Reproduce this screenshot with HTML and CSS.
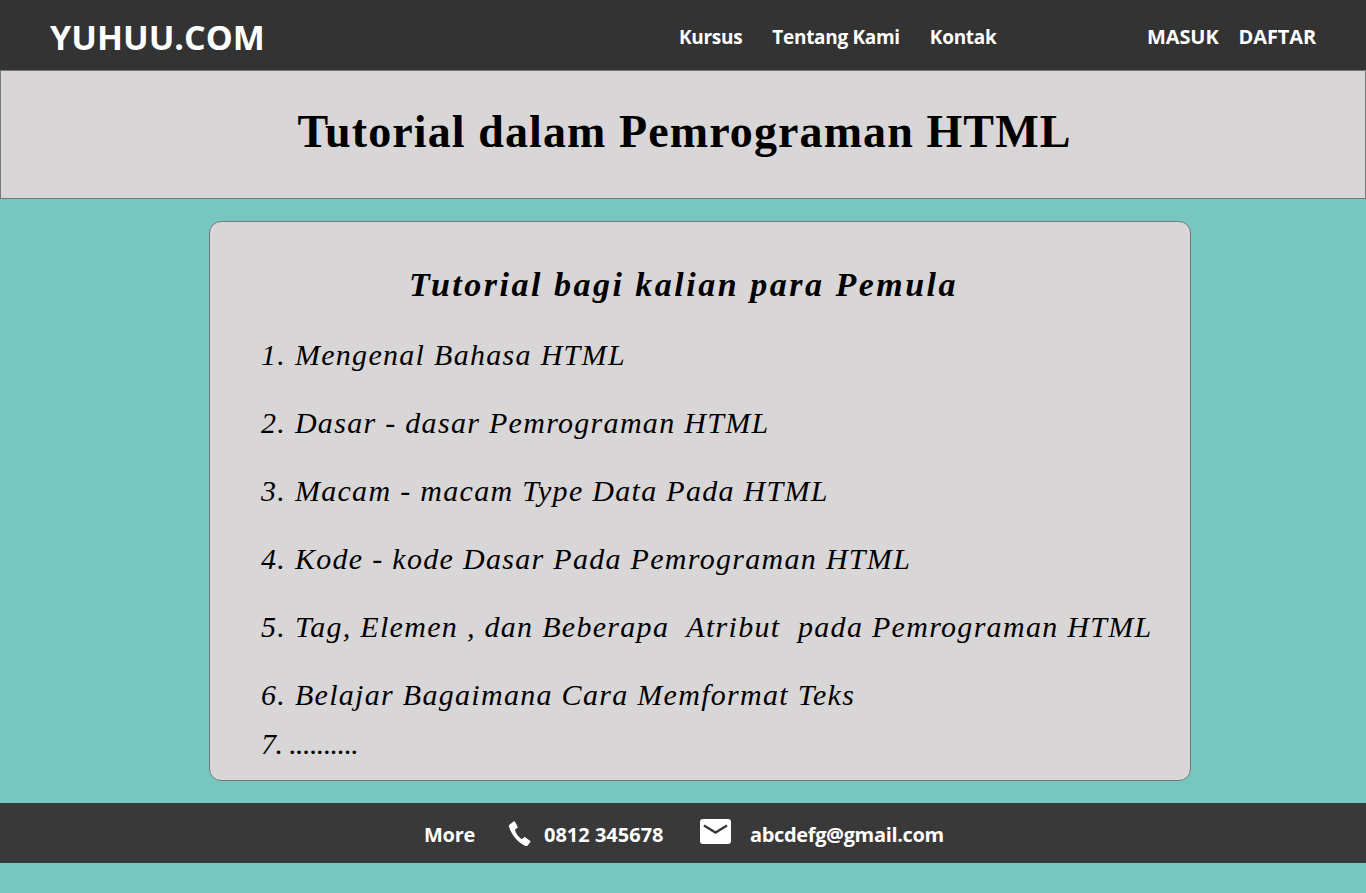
FILE: index.html
```html
<!DOCTYPE html>
<html lang="id">
<head>
    <meta charset="UTF-8">
    <meta name="viewport" content="width=device-width, initial-scale=1.0">
    <title>Tutorial dalam Pemrograman HTML</title>
    <link rel="stylesheet" href="styles.css">
</head>
<body>
    <header class="topbar">
        <div class="logo">YUHUU.COM</div>
        <nav class="menu">
            <a href="#">Kursus</a>
            <a href="#">Tentang Kami</a>
            <a href="#">Kontak</a>
        </nav>
        <div class="akun">
            <a href="#">MASUK</a>
            <a href="#">DAFTAR</a>
        </div>
    </header>

    <section class="banner">
        <h1>Tutorial dalam Pemrograman HTML</h1>
    </section>

    <main class="kartu">
        <h2>Tutorial bagi kalian para Pemula</h2>
        <ul class="daftar">
            <li>1. Mengenal Bahasa HTML</li>
            <li>2. Dasar - dasar Pemrograman HTML</li>
            <li>3. Macam - macam Type Data Pada HTML</li>
            <li>4. Kode - kode Dasar Pada Pemrograman HTML</li>
            <li>5. Tag, Elemen , dan Beberapa&nbsp; Atribut&nbsp; pada Pemrograman HTML</li>
            <li>6. Belajar Bagaimana Cara Memformat Teks</li>
            <li class="akhir">7. ..........</li>
        </ul>
    </main>

    <footer class="bawah">
        <span class="more">More</span>
        <svg class="ikon-telp" viewBox="0 0 24 26" width="24" height="26">
            <path fill="#fff" d="M2 3.2 5.6.6c.6-.4 1.2-.3 1.5.3l2.5 4.6c.3.6.2 1.1-.3 1.5L7.4 8.300c-.4.300-.5.700-.3 1.200 1 3 3.200 6.200 6 8.200.4.300.8.300 1.200 0l1.700-1.300c.5-.4 1-.4 1.500 0l4.500 3.300c.5.400.6 1 .2 1.500l-2.600 3.200c-.5.600-1.200.8-2 .5C10.800 22.400 3.400 14.500.9 5.300.7 4.400 1.200 3.700 2 3.200z"/>
        </svg>
        <span class="telp">0812 345678</span>
        <svg class="ikon-surat" viewBox="0 0 31 25" width="31" height="25">
            <rect width="31" height="25" rx="3" fill="#fff"/>
            <path d="M4 6.500 15.500 13.500 27 6.500" fill="none" stroke="#393939" stroke-width="2.400"/>
        </svg>
        <span class="email">abcdefg@gmail.com</span>
    </footer>
</body>
</html>
```

FILE: styles.css
```css
body {
    background-color: #76c7c0;
    margin: 0;
    font-family: "Open Sans", "Noto Sans", sans-serif;
    color: #000;
}
a {
    color: #fff;
    text-decoration: none;
}
.topbar {
    background-color: #333;
    height: 70px;
    display: flex;
    align-items: center;
    color: #fff;
    font-weight: 700;
    padding-top: 3px;
    box-sizing: border-box;
}
.logo {
    font-size: 34px;
    font-weight: 700;
    margin-left: 50px;
    width: 629px;
}
.menu {
    display: flex;
    gap: 30px;
    font-size: 19px;
    letter-spacing: -0.3px;
    width: 468px;
}
.akun {
    display: flex;
    gap: 20px;
    font-size: 20px;
    letter-spacing: -0.1px;
}
.banner {
    background-color: #d8d6d7;
    border: 1px solid #777;
    height: 127px;
    display: flex;
    justify-content: center;
}
h1 {
    font-family: "Liberation Serif", serif;
    font-size: 46px;
    font-weight: 700;
    letter-spacing: 1.1px;
    margin: 36px 0 0;
    padding-left: 3px;
    line-height: 50px;
}
.kartu {
    background-color: #d8d6d7;
    border: 1px solid #777;
    border-radius: 12px;
    width: 980px;
    height: 558px;
    margin: 22px 0 22px 209px;
    font-family: "Liberation Serif", serif;
    font-style: italic;
}
h2 {
    font-size: 34px;
    font-weight: 700;
    letter-spacing: 2.500px;
    text-align: center;
    margin: 43px 0 0;
    padding-right: 33px;
    line-height: 40px;
}
.daftar {
    list-style: none;
    margin: 30px 0 0;
    padding: 0 0 0 51px;
    font-size: 30px;
    letter-spacing: 1.300px;
    line-height: 40px;
}
.daftar li {
    margin-bottom: 28px;
    white-space: nowrap;
}
.daftar li.akhir {
    margin-top: -19px;
    margin-bottom: 0;
    letter-spacing: -0.6px;
}
.bawah {
    background-color: #393939;
    height: 60px;
    display: flex;
    align-items: center;
    color: #fff;
    font-size: 20px;
    font-weight: 700;
    padding-left: 424px;
    padding-top: 3px;
    box-sizing: border-box;
}
.more {
    width: 84px;
    letter-spacing: -0.3px;
}
.ikon-telp {
    margin-right: 12px;
    margin-top: -1px;
}
.telp {
    width: 156px;
}
.ikon-surat {
    margin-right: 19px;
    margin-top: -6px;
}
.email {
    letter-spacing: -0.35px;
}
```
